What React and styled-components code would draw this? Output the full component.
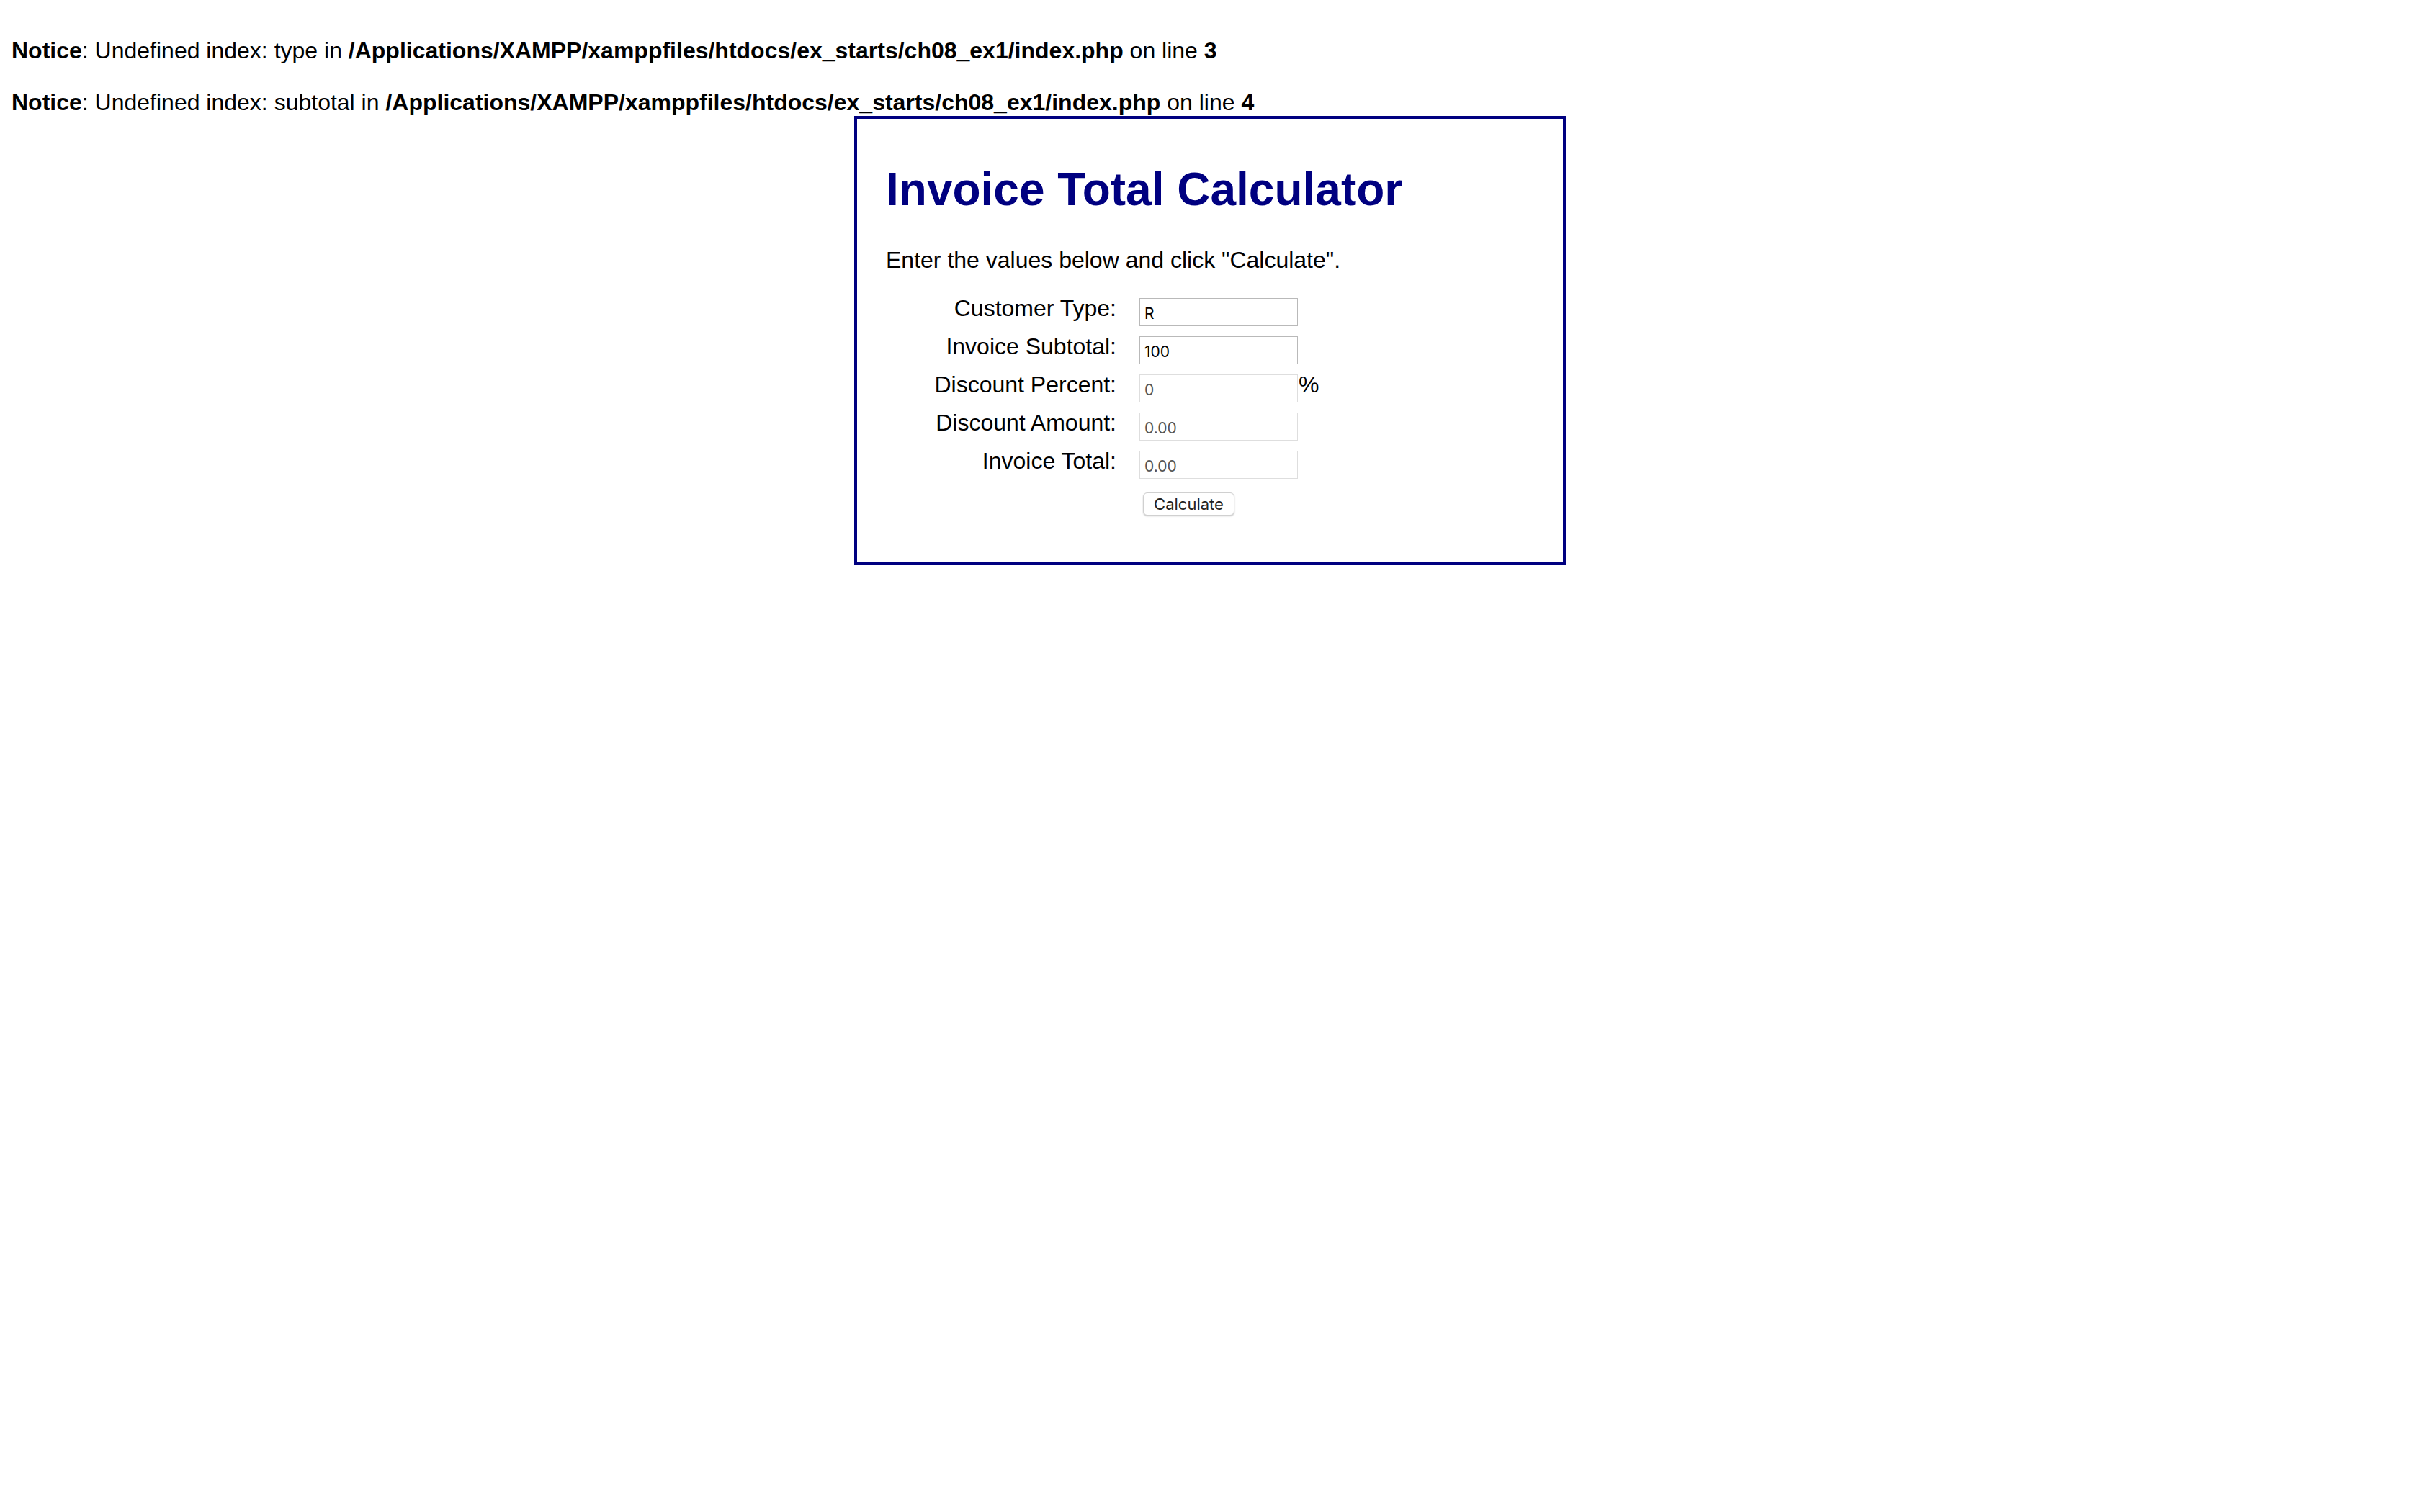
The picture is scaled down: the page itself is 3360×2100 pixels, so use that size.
import React from "react";
import styled, { createGlobalStyle } from "styled-components";

const GlobalStyle = createGlobalStyle`
  html, body {
    background: #ffffff;
  }
  body {
    margin: 16px;
    font-family: "Liberation Sans", Arial, Helvetica, sans-serif;
    font-size: 32px;
    line-height: 36px;
    color: #000000;
  }
`;

const notices = [
  { name: "type", line: 3 },
  { name: "subtotal", line: 4 },
];

const fields = [
  { label: "Customer Type:", value: "R" },
  { label: "Invoice Subtotal:", value: "100" },
  { label: "Discount Percent:", value: "0", disabled: true, suffix: "%" },
  { label: "Discount Amount:", value: "0.00", disabled: true },
  { label: "Invoice Total:", value: "0.00", disabled: true },
];

const App = () => {
  return (
    <>
      <GlobalStyle />
      <Notices>
        {notices.map((n) => (
          <NoticeLine key={n.name}>
            <b>Notice</b>: Undefined index: {n.name} in{" "}
            <b>/Applications/XAMPP/xamppfiles/htdocs/ex_starts/ch08_ex1/index.php</b> on line{" "}
            <b>{n.line}</b>
          </NoticeLine>
        ))}
      </Notices>
      <Main>
        <Title>Invoice Total Calculator</Title>
        <Intro>Enter the values below and click "Calculate".</Intro>
        <Form onSubmit={(e) => e.preventDefault()}>
          {fields.map((f) => (
            <Row key={f.label}>
              <Label>{f.label}</Label>
              <Input
                type="text"
                defaultValue={f.value}
                disabled={f.disabled}
                $disabled={f.disabled}
              />
              {f.suffix && <Suffix>{f.suffix}</Suffix>}
            </Row>
          ))}
          <ButtonRow>
            <CalcButton type="submit">Calculate</CalcButton>
          </ButtonRow>
        </Form>
      </Main>
    </>
  );
};
export default App;

const Notices = styled.div`
  display: flex;
  flex-direction: column;
  gap: 36px;
  padding: 36px 0 1px;
`;

const NoticeLine = styled.div`
  white-space: nowrap;
`;

const Main = styled.main`
  display: block;
  width: 900px;
  margin: 0 auto;
  padding: 20px 40px;
  border: 4px solid #000080;
`;

const Title = styled.h1`
  margin: 41px 0 43px;
  font-size: 64px;
  line-height: 74px;
  font-weight: bold;
  color: #000080;
`;

const Intro = styled.p`
  margin: 43px 0 0;
  line-height: 36px;
`;

const Form = styled.form`
  display: flex;
  flex-direction: column;
  gap: 14px;
  margin: 35px 0 45px;
`;

const Row = styled.div`
  display: flex;
  align-items: flex-start;
`;

const Label = styled.label`
  flex: 0 0 352px;
  box-sizing: border-box;
  padding-right: 32px;
  text-align: right;
  line-height: 29px;
`;

const Input = styled.input`
  box-sizing: border-box;
  width: 220px;
  height: 39px;
  margin: 0;
  padding: 4px 6px 0;
  border: 1px solid ${(p) => (p.$disabled ? "#dedede" : "#b9b9b9")};
  border-radius: 0;
  background: #ffffff;
  font-family: Inter, "Open Sans", sans-serif;
  font-size: 21px;
  color: ${(p) => (p.$disabled ? "#555555" : "#000000")};
  -webkit-text-fill-color: ${(p) => (p.$disabled ? "#555555" : "#000000")};
  opacity: 1;
  outline: none;
`;

const Suffix = styled.span`
  line-height: 29px;
  padding-left: 1px;
`;

const ButtonRow = styled.div`
  padding-left: 357px;
  margin-top: 0;
`;

const CalcButton = styled.button`
  box-sizing: border-box;
  width: 127px;
  height: 32px;
  padding: 0;
  border: 1px solid #d0d0d0;
  border-radius: 6px;
  background: #ffffff;
  box-shadow: 0 1px 2px rgba(0, 0, 0, 0.22);
  font-family: Inter, "Open Sans", sans-serif;
  font-size: 22px;
  color: #222222;
  cursor: pointer;
`;
